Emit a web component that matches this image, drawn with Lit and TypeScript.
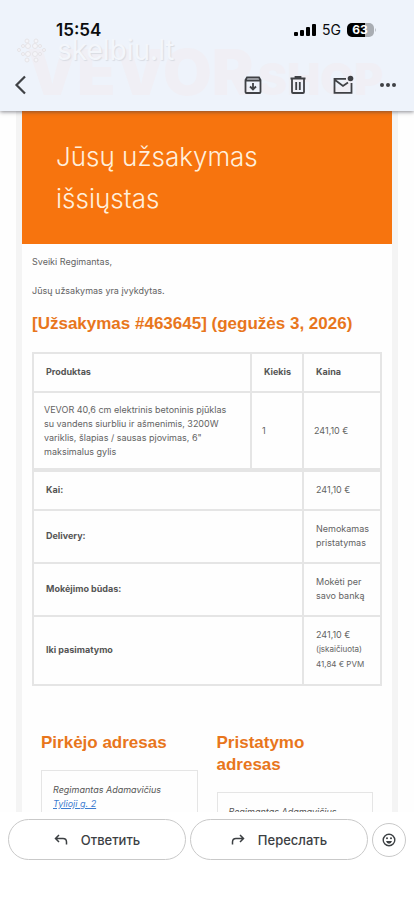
import { LitElement, html, css, svg } from "lit";
import { customElement } from "lit/decorators.js";

@customElement("status-bar")
class StatusBar extends LitElement {
  static styles = css`
    :host {
      display: flex;
      align-items: center;
      justify-content: space-between;
      padding: 20px 38px 0 56px;
      color: #0b0c0e;
      font-family: Inter, "Liberation Sans", sans-serif;
    }
    .time {
      font-size: 17px;
      line-height: 20px;
      font-weight: 600;
    }
    .right {
      display: flex;
      align-items: center;
      gap: 6px;
    }
    .net {
      font-size: 14px;
      line-height: 20px;
    }
    svg {
      display: block;
    }
    .level {
      font: 700 12px Inter, "Liberation Sans", sans-serif;
      fill: #fff;
    }
  `;
  render() {
    return html`
      <span class="time">15:54</span>
      <span class="right">
        <svg width="22" height="14" viewBox="0 0 22 14" aria-hidden="true">
          <rect x="0" y="9" width="4" height="4" rx="1" />
          <rect x="6" y="7" width="4" height="6" rx="1" />
          <rect x="12" y="4" width="4" height="9" rx="1" />
          <rect x="18" y="1" width="4" height="12" rx="1" />
        </svg>
        <span class="net">5G</span>
        <svg width="29" height="14" viewBox="0 0 29 14">
          <path d="M5 0h13v14H5a5 5 0 0 1-5-5V5a5 5 0 0 1 5-5z" />
          <path d="M18 0h4a5 5 0 0 1 5 5v4a5 5 0 0 1-5 5h-4z" fill="#a9adb3" />
          <path d="M28 5q1.500 2 0 4z" fill="#a9adb3" />
          <text class="level" x="13" y="11" text-anchor="middle">63</text>
        </svg>
      </span>
    `;
  }
}

const icons = {
  back: svg`<path d="M16 2.500 7.500 11l8.500 8.500" stroke-width="2.200" />`,
  archive: svg`<path d="M3.500 6 5 3.500h12L18.500 6v12q0 1-1 1h-13q-1 0-1-1zM3.500 6.500h15M11 9v6.500M8 12.500l3 3 3-3" />`,
  trash: svg`<path d="M5 5v13q0 1 1 1h10q1 0 1-1V5M3.500 4.500h15M8.500 4V3h5v1M9.200 8v8M12.800 8v8" />`,
  unread: svg`<path d="M14 4.800H2.500v14h17V9M3 6l8 6 5-3.500" /><circle cx="18.500" cy="4.500" r="2.800" fill="currentColor" stroke="none" />`,
  more: svg`<g fill="currentColor" stroke="none"><circle cx="5" cy="11" r="2" /><circle cx="11" cy="11" r="2" /><circle cx="17" cy="11" r="2" /></g>`,
};

@customElement("mail-toolbar")
class MailToolbar extends LitElement {
  static styles = css`
    :host {
      display: flex;
      align-items: center;
      justify-content: space-between;
      padding: 0 15px 0 9px;
    }
    button {
      all: unset;
      display: block;
      color: #3f4145;
    }
    .actions {
      display: flex;
      gap: 23px;
    }
    svg {
      display: block;
      fill: none;
      stroke: currentColor;
      stroke-width: 1.800;
    }
  `;
  private icon(label: string, shape: unknown) {
    return html`<button type="button" aria-label=${label}>
      <svg width="22" height="22" viewBox="0 0 22 22">${shape}</svg>
    </button>`;
  }
  render() {
    return html`
      ${this.icon("Назад", icons.back)}
      <div class="actions">
        ${this.icon("Архивировать", icons.archive)}
        ${this.icon("Удалить", icons.trash)}
        ${this.icon("Не прочитано", icons.unread)}
        ${this.icon("Ещё", icons.more)}
      </div>
    `;
  }
}

@customElement("order-table")
class OrderTable extends LitElement {
  static styles = css`
    table {
      width: 100%;
      table-layout: fixed;
      border-collapse: collapse;
      color: #636363;
      font-size: 9px;
      line-height: 14px;
    }
    th,
    td {
      border: 2px solid #e5e5e5;
      padding: 11px 8px 12px 12px;
      text-align: left;
      vertical-align: middle;
    }
    th {
      font-weight: 700;
      color: #555;
    }
    tbody td {
      padding: 10px 8px 9px 10px;
    }
    tbody td:first-child {
      padding-right: 20px;
    }
    tfoot tr:first-child > * {
      border-top-width: 4px;
    }
    .qty {
      width: 52px;
      box-sizing: border-box;
    }
    .price {
      width: 78px;
      box-sizing: border-box;
    }
    small {
      display: block;
      font-size: 8px;
      line-height: 15px;
      white-space: nowrap;
    }
  `;
  render() {
    return html`
      <table>
        <thead>
          <tr>
            <th scope="col">Produktas</th>
            <th scope="col" class="qty">Kiekis</th>
            <th scope="col" class="price">Kaina</th>
          </tr>
        </thead>
        <tbody>
          <tr>
            <td>
              VEVOR 40,6 cm elektrinis betoninis pjūklas su vandens siurbliu ir
              ašmenimis, 3200W variklis, šlapias / sausas pjovimas, 6" maksimalus
              gylis
            </td>
            <td>1</td>
            <td>241,10 €</td>
          </tr>
        </tbody>
        <tfoot>
          <tr>
            <th scope="row" colspan="2">Kai:</th>
            <td>241,10 €</td>
          </tr>
          <tr>
            <th scope="row" colspan="2">Delivery:</th>
            <td>Nemokamas pristatymas</td>
          </tr>
          <tr>
            <th scope="row" colspan="2">Mokėjimo būdas:</th>
            <td>Mokėti per savo banką</td>
          </tr>
          <tr>
            <th scope="row" colspan="2">Iki pasimatymo</th>
            <td>
              241,10 €
              <small>(įskaičiuota)</small>
              <small>41,84 € PVM</small>
            </td>
          </tr>
        </tfoot>
      </table>
    `;
  }
}

@customElement("app-root")
class AppRoot extends LitElement {
  static styles = css`
    :host {
      display: flex;
      flex-direction: column;
      height: 100vh;
      background: #fefefe;
      font-family: Inter, "Liberation Sans", sans-serif;
      overflow: hidden;
    }
    header {
      position: relative;
      z-index: 1;
      display: flex;
      flex-direction: column;
      gap: 34px;
      padding-bottom: 15px;
      background: #eef3fb;
      box-shadow: 0 1px 4px rgba(60, 60, 70, 0.6);
    }
    status-bar,
    mail-toolbar {
      position: relative;
    }
    .ghost {
      position: absolute;
      left: 27px;
      top: 36px;
      display: flex;
      align-items: baseline;
      gap: 4px;
      color: #f0eff5;
      font-weight: 900;
      font-size: 63px;
      line-height: 72px;
    }
    .ghost small {
      font-size: 44px;
    }
    .mark {
      position: absolute;
      left: 16px;
      top: 36px;
      display: flex;
      align-items: center;
      gap: 10px;
      color: #f3f6fb;
      font-size: 28px;
      line-height: 28px;
      text-shadow: 1px 1px 1px #d9dce3;
    }
    main {
      flex: 1;
      min-height: 0;
      overflow: hidden;
      padding: 0 16px;
    }
    .sheet {
      border: solid #f4f4f4;
      border-width: 0 6px;
      min-height: 100%;
    }
    h1 {
      margin: 0;
      padding: 25px 34px 24px;
      background: #f7740e;
      color: #ffefdc;
      font-size: 26px;
      line-height: 42px;
      font-weight: 300;
    }
    .body {
      padding: 11px 10px;
    }
    p {
      margin: 0 0 15px;
      font-size: 9px;
      line-height: 14px;
      color: #636363;
    }
    h2 {
      margin: 0;
      font-family: "Liberation Sans", Arial, sans-serif;
      font-size: 17px;
      line-height: 22px;
      font-weight: 700;
      color: #e8761c;
    }
    order-table {
      display: block;
      margin: 17px 0 46px;
    }
    .addresses {
      display: grid;
      grid-template-columns: 1fr 1fr;
      gap: 19px;
      align-items: start;
      padding: 0 9px;
    }
    .addresses h2 {
      padding-right: 20px;
    }
    address {
      margin-top: 16px;
      padding: 12px 11px;
      border: 1px solid #e5e5e5;
      font-size: 9px;
      line-height: 14px;
      color: #555;
    }
    a {
      color: #3b7bd0;
    }
    footer {
      display: flex;
      align-items: center;
      gap: 4px;
      padding: 7px 8px 40px;
      background: #fff;
    }
    .pill,
    .round {
      display: flex;
      align-items: center;
      justify-content: center;
      box-sizing: border-box;
      margin: 0;
      padding: 0;
      border: 1px solid #c9c9c9;
      background: #fff;
      color: #3c4043;
    }
    .pill {
      flex: 1;
      gap: 13px;
      height: 41px;
      border-radius: 21px;
      font: 500 13px/20px Inter, "Liberation Sans", sans-serif;
    }
    .round {
      width: 34px;
      height: 34px;
      border-radius: 50%;
    }
    svg {
      display: block;
      fill: none;
      stroke: currentColor;
    }
  `;
  render() {
    return html`
      <header>
        <div class="ghost" aria-hidden="true">VEVOR<small>SHOP</small></div>
        <div class="mark" aria-hidden="true">
          <svg width="31" height="26" viewBox="0 0 31 26">
            <g fill="#f5f5f9" stroke="#e6e4e8" stroke-width="1">
              <circle cx="11" cy="4" r="2" /><circle cx="20" cy="4" r="2" />
              <circle cx="3" cy="13" r="1.500" /><circle cx="28" cy="13" r="1.500" />
              <circle cx="7" cy="9" r="1.500" /><circle cx="12" cy="9" r="2.500" />
              <circle cx="19" cy="9" r="2.500" /><circle cx="24" cy="9" r="1.500" />
              <circle cx="7" cy="17" r="1.500" /><circle cx="12" cy="17" r="2.500" />
              <circle cx="19" cy="17" r="2.500" /><circle cx="24" cy="17" r="1.500" />
              <circle cx="11" cy="23" r="2" /><circle cx="20" cy="23" r="2" />
            </g>
          </svg>
          <span>skelbiu.lt</span>
        </div>
        <status-bar></status-bar>
        <mail-toolbar></mail-toolbar>
      </header>
      <main>
        <article class="sheet">
          <h1>Jūsų užsakymas išsiųstas</h1>
          <div class="body">
            <p>Sveiki Regimantas,</p>
            <p>Jūsų užsakymas yra įvykdytas.</p>
            <h2>[Užsakymas #463645] (gegužės 3, 2026)</h2>
            <order-table></order-table>
            <div class="addresses">
              <section>
                <h2>Pirkėjo adresas</h2>
                <address>
                  Regimantas Adamavičius<br /><a href="#">Tylioji g. 2</a>
                </address>
              </section>
              <section>
                <h2>Pristatymo adresas</h2>
                <address>
                  Regimantas Adamavičius<br /><a href="#">Tylioji g. 2</a>
                </address>
              </section>
            </div>
          </div>
        </article>
      </main>
      <footer>
        <button class="pill" type="button">
          <svg width="14" height="12" viewBox="0 0 14 12" stroke-width="1.500">
            <path d="M5 1 1.500 4.500 5 8M1.500 4.500H9q3.500 0 3.500 3.500v2.500" />
          </svg>
          Ответить
        </button>
        <button class="pill" type="button">
          <svg width="14" height="12" viewBox="0 0 14 12" stroke-width="1.500">
            <path d="M9 1l3.500 3.500L9 8M12.500 4.500H5Q1.500 4.500 1.500 8v2.500" />
          </svg>
          Переслать
        </button>
        <button class="round" type="button" aria-label="Добавить реакцию">
          <svg width="14" height="14" viewBox="0 0 14 14" stroke-width="1.400">
            <circle cx="7" cy="7" r="5.800" />
            <path d="M4 8h6q-.8 2.800-3 2.800T4 8z" fill="currentColor" stroke="none" />
            <circle cx="5" cy="5.300" r="1" fill="currentColor" stroke="none" />
            <circle cx="9" cy="5.300" r="1" fill="currentColor" stroke="none" />
          </svg>
        </button>
      </footer>
    `;
  }
}
